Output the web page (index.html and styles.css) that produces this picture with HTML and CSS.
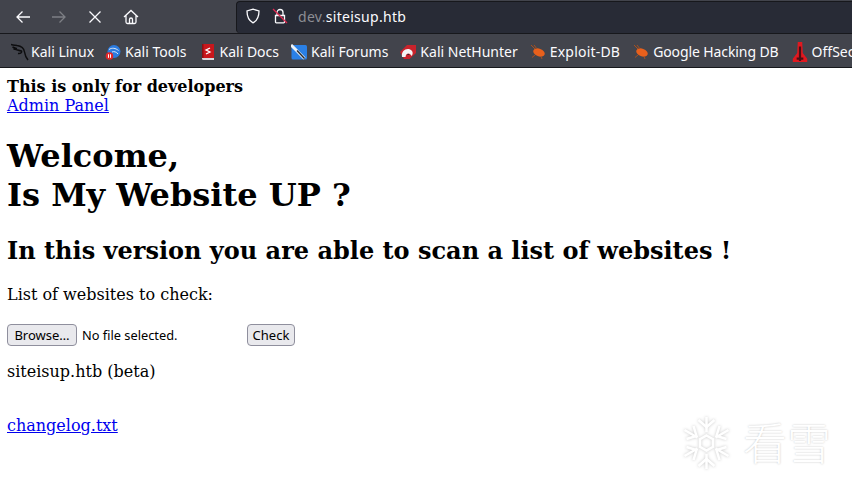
FILE: index.html
```html
<!DOCTYPE html>
<html lang="en">
<head>
<meta charset="utf-8">
<title>Is My Website UP ?</title>
<link rel="stylesheet" href="styles.css">
</head>
<body>
<header class="chrome">
  <div class="navbar">
    <div class="nav-buttons">
      <svg class="nav-icon" viewBox="0 0 16 16"><path d="M15 8H2M7.500 2.500 2 8l5.500 5.500"/></svg>
      <svg class="nav-icon dim" viewBox="0 0 16 16"><path d="M1 8h13M8.500 2.500 14 8l-5.500 5.500"/></svg>
      <svg class="nav-icon" viewBox="0 0 16 16"><path d="M2.500 2.500l11 11M13.500 2.500l-11 11"/></svg>
      <svg class="nav-icon" viewBox="0 0 16 16"><path d="M1 8 8 1.500 15 8M3 6.500V13a1.500 1.500 0 0 0 1.500 1.500h7A1.500 1.500 0 0 0 13 13V6.500M6.500 14.500V10.500a1.500 1.500 0 0 1 3 0v4"/></svg>
    </div>
    <div class="urlbar">
      <svg class="url-icon" viewBox="0 0 16 16"><path d="M8 1.200 14 3c0 6-1.500 9.500-6 11.800C3.500 12.500 2 9 2 3z"/></svg>
      <svg class="url-icon lock" viewBox="0 0 16 16"><path d="M5 7V4.500a3 3 0 0 1 6 0V7M3.500 7.500h9v6.500a.8.8 0 0 1-.8.8H4.300a.8.8 0 0 1-.8-.8z"/><path class="slash" d="M1 1l14 14"/></svg>
      <span class="url"><span class="url-dim">dev.</span>siteisup.htb</span>
    </div>
  </div>
  <nav class="bookmarks">
    <span class="bookmark"><svg class="bm-icon kali" viewBox="0 0 18 18"><path class="dragon" d="M0 1.500c3 1 4 .5 6 1 4 .5 7 3 7.500 6.500.300 2 1 5 3.500 8M1.500 4c2 1 3 1 4.500 1.500M2.500 6c3 .5 5 1.500 8 2 .5 1.500-1 3-3.500 2.500"/></svg>Kali Linux</span>
    <span class="bookmark nudge-a"><svg class="bm-icon" viewBox="0 0 16 16"><circle cx="9" cy="7.500" r="6.500" fill="#2b7be0"/><path d="M4 5.500c3-2 6.500-1.500 9.500 1M7 8c2-1 4.500 0 6 2" stroke="#dfe9f5" fill="none"/><circle cx="4.500" cy="12" r="3.800" fill="#e0282a"/><path d="M3.500 10.300v3.500M5.500 10.300v3.500" stroke="#fff"/></svg>Kali Tools</span>
    <span class="bookmark"><svg class="bm-icon" viewBox="0 0 16 16"><path d="M2 0h12v14H2z" fill="#c8171c"/><path d="M2 14h12v2H3.500A1.500 1.500 0 0 1 2 14.500z" fill="#d8d8dc"/><path d="M2 0h1.500v14H2z" fill="#8c1013"/><path d="M10 4 6 6l4 2-4 2" stroke="#fff" fill="none" stroke-width="1.300"/></svg>Kali Docs</span>
    <span class="bookmark"><svg class="bm-icon" viewBox="0 0 16 16"><rect x="0.500" y="1" width="15.500" height="14.500" rx="1.500" fill="#2a80e6"/><path d="M0 1 13.500 14.500" stroke="#eef2f6" stroke-width="3"/><path d="M6 6.500 13.500 14.500" stroke="#26282d" stroke-width="1.300"/></svg>Kali Forums</span>
    <span class="bookmark"><svg class="bm-icon" viewBox="0 0 16 16"><path d="M0 8 7 1h9v8l-6.500 6H4z" fill="#c8232c"/><path d="M2 13c-1-6 4-9 8-7.500 3 1 3.500 4.500 1.500 6.500-1-3-5.500-4-6 1z" fill="#f4f4f4"/><path d="M7 11c.5-1.500 2-1.500 2.500 0z" fill="#26282d"/></svg>Kali NetHunter</span>
    <span class="bookmark wide"><svg class="bm-icon" viewBox="0 0 16 16"><ellipse cx="9" cy="8.500" rx="6" ry="3.800" fill="#e8601c" transform="rotate(20 9 8.500)"/><path d="M5 5 1 1M7 5 4 1M5 11l-3 2.500M11 12.500l1 2.500" stroke="#a8501f" fill="none"/></svg>Exploit-DB</span>
    <span class="bookmark narrow"><svg class="bm-icon" viewBox="0 0 16 16"><ellipse cx="9" cy="8.500" rx="6" ry="3.800" fill="#e8601c" transform="rotate(20 9 8.500)"/><path d="M5 5 1 1M7 5 4 1M5 11l-3 2.500M11 12.500l1 2.500" stroke="#a8501f" fill="none"/></svg>Google Hacking DB</span>
    <span class="bookmark"><svg class="bm-icon offsec" viewBox="0 0 14 18"><path d="M5 0h4l.5 10 4 5v3H.500v-3l4-5z" fill="#e0181f"/><path d="M7 4v13M4 15h6" stroke="#4a1014" stroke-width="2"/></svg>OffSec</span>
  </nav>
</header>
<main class="page">
  <b>This is only for developers</b><br>
  <a href="#">Admin Panel</a>
  <h1>Welcome,<br>Is My Website UP ?</h1>
  <h2>In this version you are able to scan a list of websites !</h2>
  <p class="label">List of websites to check:</p>
  <form class="form">
    <button class="btn browse" type="button">Browse…</button>
    <span class="file-state">No file selected.</span>
    <button class="btn check" type="submit">Check</button>
  </form>
  <p class="beta">siteisup.htb (beta)</p>
  <p class="log"><a href="#">changelog.txt</a></p>
</main>
<div class="watermark">
  <svg class="flake" viewBox="0 0 50 58"><path d="M25 3v15M25 40v15M3 16l13 7.500M34 34.500 47 42M3 42l13-7.500M34 23.500 47 16"/><path d="M17 6l8 7 8-7M17 52l8-7 8 7M5 25l10-3-3-10M45 33l-10 3 3 10M5 33l10 3-3 10M45 25l-10-3 3-10"/><path d="M25 21.500l6.500 3.750v7.500L25 36.500l-6.500-3.750v-7.500z"/></svg>
  <span class="wm-text">看雪</span>
</div>
</body>
</html>
```
FILE: styles.css
```css
html, body { margin: 0; padding: 0; height: 495px; overflow: hidden; background: #fff; }
body { font-family: "DejaVu Serif", serif; font-size: 16px; color: #000; position: relative; }

.chrome { background: #42444c; border-bottom: 1px solid #17181c; height: 67px; display: flex; flex-direction: column; overflow: hidden; }
.navbar { height: 33px; display: flex; align-items: center; border-bottom: 1px solid #17181c; }
.nav-buttons { display: flex; gap: 20px; padding-left: 15px; width: 221px; box-sizing: border-box; }
.nav-icon { width: 16px; height: 16px; fill: none; stroke: #fbfbfe; stroke-width: 1.300; }
.nav-icon.dim { stroke: #7d7f85; }
.urlbar { flex: 1; height: 32px; margin: 0 0 0 15px; background: #282b36; border: 1px solid #17181c; border-bottom: none; border-right: none; border-radius: 4px 0 0 4px; display: flex; align-items: center; padding: 0 0 2px 8px; color: #fbfbfe; font-family: "Noto Sans", sans-serif; font-size: 14px; box-sizing: border-box; }
.url-icon { width: 16px; height: 16px; fill: none; stroke: #fbfbfe; stroke-width: 1.300; margin-right: 11px; flex: none; }
.url-icon.lock { margin-right: 10px; }
.slash { stroke: #e22850; }
.url { letter-spacing: .3px; }
.url-dim { color: #8d8e94; }

.bookmarks { flex: 1; display: flex; align-items: center; padding: 2px 0 0 11px; color: #fbfbfe; font-family: "Noto Sans", sans-serif; font-size: 14px; white-space: nowrap; gap: 12px; }
.bookmark { display: flex; align-items: center; gap: 4px; }
.bookmark.nudge-a { margin: 0 1px 0 -1px; }
.bookmark.wide { letter-spacing: .2px; margin-right: 1px; }
.bookmark.narrow { letter-spacing: -.1px; margin-right: 1px; }
.bm-icon { width: 16px; height: 16px; flex: none; }
.bm-icon.kali { width: 18px; height: 18px; margin: 0 -2px 0 0; }
.bm-icon.offsec { height: 20px; }
.dragon { fill: none; stroke: #0d0d0f; stroke-width: 1.500; }

.page { padding: 9px 7px 0; }
.page a { color: #00e; }
h1 { font-size: 32px; line-height: 39px; margin: 22px 0 0; }
h2 { font-size: 24px; line-height: 28px; margin: 22px 0 0; }
.label { margin: 20px 0 0; line-height: 19px; }
.form { margin: 19px 0 0; display: flex; align-items: center; height: 24px; font-family: "Noto Sans", sans-serif; font-size: 13px; }
.btn { font: inherit; color: #000; height: 22px; padding: 0; background: #e9e9ed; border: 1px solid #8f8f9d; border-radius: 4px; margin: 0; }
.browse { width: 70px; }
.check { width: 48px; }
.file-state { width: 170px; padding-left: 5px; box-sizing: border-box; font-size: 12.800px; }
.beta { margin: 15px 0 0; line-height: 19px; }
.log { margin: 35px 0 0; line-height: 19px; }

.watermark { position: absolute; left: 681px; top: 414px; display: flex; align-items: center; gap: 11px; }
.flake { width: 51px; height: 58px; fill: none; stroke: #fff; stroke-width: 2.500; filter: drop-shadow(0 0 1.500px rgba(0, 0, 0, .22)); }
.wm-text { font-family: "Noto Sans CJK SC", sans-serif; font-weight: 300; font-size: 44px; line-height: 58px; color: #fff; text-shadow: 0 0 2px rgba(0, 0, 0, .25); position: relative; top: -2px; }
```
